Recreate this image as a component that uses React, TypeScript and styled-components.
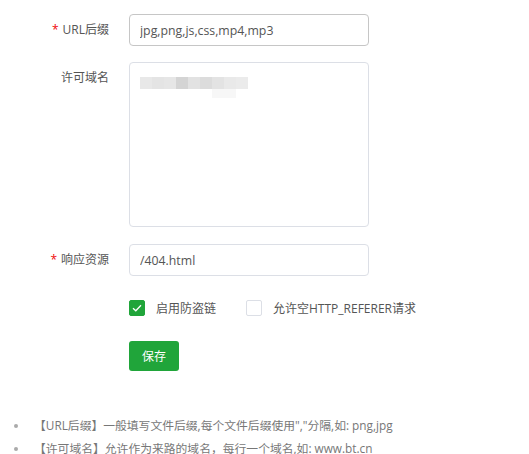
import React, { FC } from "react";
import styled, { createGlobalStyle } from "styled-components";

const GlobalStyle = createGlobalStyle`
  html, body {
    margin: 0;
    padding: 0;
    background: #fff;
  }
  body {
    font-family: "Open Sans", "Noto Sans CJK SC", sans-serif;
    font-size: 12px;
    color: #555;
  }
`;

interface FieldProps {
  label: string;
  required?: boolean;
  top?: boolean;
}

const Field: FC<React.PropsWithChildren<FieldProps>> = ({
  label,
  required,
  top,
  children,
}) => (
  <Row $top={top}>
    <Label>
      {required && <Star>*</Star>}
      {label}
    </Label>
    {children}
  </Row>
);

const Mosaic: FC = () => {
  const shades = [
    "#e8e8e8",
    "#e4e4e4",
    "#e6e6e6",
    "#d4d4d4",
    "#e2e2e2",
    "#dcdcdc",
    "#e3e3e3",
    "#e9e9e9",
    "#ebebeb",
  ];
  return (
    <svg width="110" height="36" viewBox="0 0 110 36">
      {shades.map((c, i) => (
        <rect key={i} x={i * 12} y={3} width={12} height={12} fill={c} />
      ))}
      <rect x={72} y={15} width={24} height={9} fill="#f7f7f7" />
    </svg>
  );
};

const App: FC = () => {
  return (
    <>
      <GlobalStyle />
      <Form>
        <Field label="URL后缀" required>
          <Input $dark defaultValue="jpg,png,js,css,mp4,mp3" />
        </Field>
        <Field label="许可域名" top>
          <TextArea>
            <Mosaic />
          </TextArea>
        </Field>
        <Field label="响应资源" required>
          <Input defaultValue="/404.html" />
        </Field>
        <Field label="">
          <Checks>
            <Check>
              <Box $checked>
                <svg width="10" height="8" viewBox="0 0 10 8">
                  <path
                    d="M1 4.2 L3.8 6.8 L9 1.2"
                    fill="none"
                    stroke="#fff"
                    strokeWidth="1.3"
                  />
                </svg>
              </Box>
              启用防盗链
            </Check>
            <Check>
              <Box />
              允许空HTTP_REFERER请求
            </Check>
          </Checks>
        </Field>
        <Field label="">
          <SaveButton>保存</SaveButton>
        </Field>
      </Form>
      <Tips>
        <Tip>【URL后缀】一般填写文件后缀,每个文件后缀使用","分隔,如: png,jpg</Tip>
        <Tip>【许可域名】允许作为来路的域名，每行一个域名,如: www.bt.cn</Tip>
      </Tips>
    </>
  );
};

export default App;

const Form = styled.div`
  display: flex;
  flex-direction: column;
  gap: 16px;
  padding-top: 14px;
`;

const Row = styled.div<{ $top?: boolean }>`
  display: flex;
  align-items: ${p => (p.$top ? "flex-start" : "center")};
  gap: 20px;
  &:nth-child(3) {
    margin-top: 1px;
  }
  &:nth-child(5) {
    margin-top: 1px;
  }
`;

const Label = styled.div`
  width: 109px;
  flex-shrink: 0;
  text-align: right;
  line-height: 32px;
  color: #555;
  font-size: 12px;
`;

const Star = styled.span`
  color: #ef0808;
  margin-right: 4px;
`;

const Input = styled.input<{ $dark?: boolean }>`
  box-sizing: border-box;
  width: 240px;
  height: 32px;
  padding: 0 10px;
  border: 1px solid ${p => (p.$dark ? "#c6c6c6" : "#dcdfe6")};
  border-radius: 4px;
  font-family: "Open Sans", "Noto Sans CJK SC", sans-serif;
  font-size: 12.3px;
  color: #555;
  outline: none;
`;

const TextArea = styled.div`
  box-sizing: border-box;
  width: 240px;
  height: 165px;
  padding: 11px 10px;
  border: 1px solid #dcdfe6;
  border-radius: 4px;
  svg {
    display: block;
  }
`;

const Checks = styled.div`
  display: flex;
  align-items: center;
  gap: 30px;
  height: 32px;
`;

const Check = styled.label`
  display: flex;
  align-items: center;
  gap: 11px;
  color: #555;
  font-size: 12px;
`;

const Box = styled.span<{ $checked?: boolean }>`
  box-sizing: border-box;
  width: 16px;
  height: 16px;
  border-radius: 2px;
  display: flex;
  align-items: center;
  justify-content: center;
  background: ${p => (p.$checked ? "#20a53a" : "#fff")};
  border: 1px solid ${p => (p.$checked ? "#20a53a" : "#dcdfe6")};
`;

const SaveButton = styled.button`
  width: 50px;
  height: 30px;
  border: none;
  border-radius: 3px;
  background: #20a53a;
  color: #fff;
  font-family: "Open Sans", "Noto Sans CJK SC", sans-serif;
  font-size: 12px;
  cursor: pointer;
`;

const Tips = styled.ul`
  list-style: none;
  margin: 43px 0 0;
  padding: 0;
  color: #777;
  font-size: 11.8px;
  line-height: 23px;
`;

const Tip = styled.li`
  display: flex;
  align-items: center;
  white-space: nowrap;
  &::before {
    content: "";
    width: 4px;
    height: 4px;
    border-radius: 50%;
    background: #aaa;
    margin: 0 16px 0 14px;
    flex-shrink: 0;
  }
`;
